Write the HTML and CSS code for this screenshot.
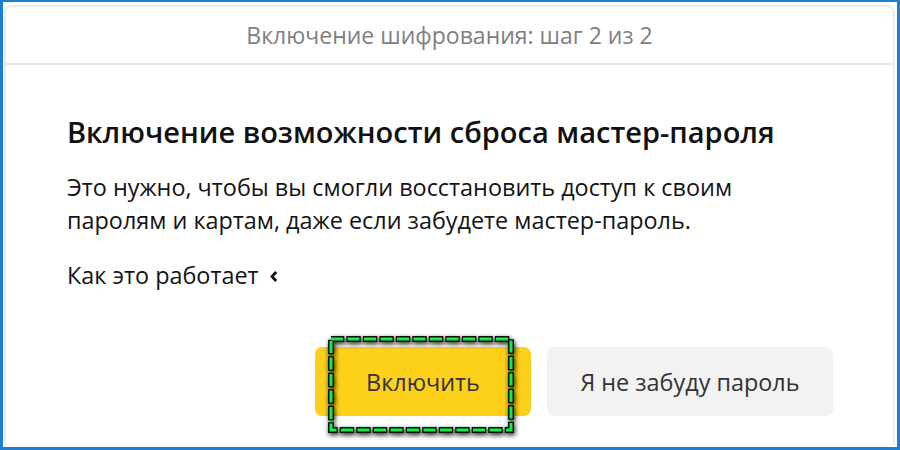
FILE: index.html
```html
<!DOCTYPE html>
<html lang="ru">
<head>
<meta charset="utf-8">
<link rel="stylesheet" href="styles.css">
</head>
<body>
<div class="frame">
  <div class="card">
    <div class="header">Включение шифрования: шаг 2 из 2</div>
    <div class="content">
      <h1 class="title">Включение возможности сброса мастер-пароля</h1>
      <p class="text">Это нужно, чтобы вы смогли восстановить доступ к своим<br>паролям и картам, даже если забудете мастер-пароль.</p>
      <div class="how">Как это работает <svg class="chev" width="10" height="13" viewBox="0 0 10 13"><path d="M7.2 2 L3 6.5 L7.2 11" fill="none" stroke="#111" stroke-width="2.8"/></svg></div>
      <div class="actions">
        <button class="btn btn-yellow">Включить</button>
        <button class="btn btn-gray">Я не забуду пароль</button>
      </div>
    </div>
  </div>
  <svg class="focus" width="200" height="110" viewBox="0 0 200 110">
    <rect x="4" y="4" width="180" height="91" fill="none" stroke="#111" stroke-width="6" stroke-dasharray="14.5 2" stroke-dashoffset="1.2"/>
    <rect x="4" y="4" width="180" height="91" fill="none" stroke="#13ee44" stroke-width="3" stroke-dasharray="12 4.5"/>
  </svg>
</div>
</body>
</html>
```

FILE: styles.css
```css
html, body {
  margin: 0;
  padding: 0;
  background: #fff;
}
.frame {
  position: relative;
  width: 900px;
  height: 450px;
  box-sizing: border-box;
  border: 3px solid #1c7fd2;
  border-top-width: 2px;
  padding: 3px 2px 2px 1px;
  background: #fff;
  font-family: "Open Sans", "Noto Sans", sans-serif;
  overflow: hidden;
}
.card {
  height: 100%;
  box-sizing: border-box;
  border: 2px solid #ececec;
  border-bottom: none;
  border-radius: 8px 8px 0 0;
  display: flex;
  flex-direction: column;
}
.header {
  height: 56px;
  flex: none;
  display: flex;
  align-items: center;
  justify-content: center;
  border-bottom: 2px solid #e6e6e6;
  color: #808080;
  font-size: 23px;
}
.content {
  padding: 49px 0 0 61px;
}
.title {
  margin: 0;
  font-size: 29px;
  line-height: 36px;
  font-weight: 600;
  color: #111;
}
.text {
  margin: 21px 0 0;
  font-size: 23.4px;
  line-height: 33px;
  color: #141414;
}
.how {
  margin-top: 22px;
  font-size: 23.4px;
  line-height: 33px;
  color: #141414;
  display: flex;
  align-items: center;
  gap: 10px;
}
.chev {
  margin-top: 2px;
}
.actions {
  display: flex;
  gap: 16px;
  margin-top: 55px;
  margin-left: 248px;
}
.btn {
  border: none;
  height: 69px;
  padding: 0;
  border-radius: 7px;
  font-family: inherit;
  font-size: 23.4px;
  color: #333;
}
.btn-yellow {
  width: 216px;
  background: #fdd019;
}
.btn-gray {
  width: 286px;
  background: #f2f2f2;
}
.focus {
  position: absolute;
  left: 324px;
  top: 333px;
  filter: drop-shadow(1px 2px 2.5px rgba(0,0,0,0.9));
}
```
